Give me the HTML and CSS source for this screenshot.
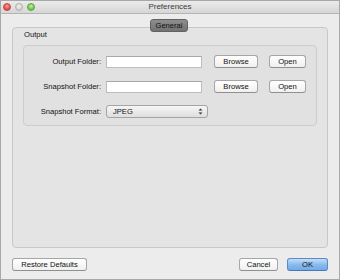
FILE: index.html
```html
<!DOCTYPE html>
<html lang="en">
<head>
    <meta charset="UTF-8">
    <title>Preferences</title>
    <link rel="stylesheet" href="styles.css">
</head>
<body>

<div class="window">
    <div class="titlebar">
        <div class="lights">
            <span class="light red"></span>
            <span class="light gray"></span>
            <span class="light green"></span>
        </div>
        <div class="title">Preferences</div>
    </div>

    <div class="content">
        <div class="tabpanel">
            <div class="tab">General</div>
            <div class="section-label">Output</div>
            <div class="group">
                <div class="row">
                    <label class="row-label">Output Folder:</label>
                    <input class="field" type="text" value="">
                    <button class="btn browse">Browse</button>
                    <button class="btn open">Open</button>
                </div>
                <div class="row">
                    <label class="row-label">Snapshot Folder:</label>
                    <input class="field" type="text" value="">
                    <button class="btn browse">Browse</button>
                    <button class="btn open">Open</button>
                </div>
                <div class="row">
                    <label class="row-label">Snapshot Format:</label>
                    <div class="select">
                        <span>JPEG</span>
                        <svg class="arrows" width="5" height="7" viewBox="0 0 5 7">
                            <path d="M0.5 2.6 L2.5 0.4 L4.5 2.6 Z" fill="#333"/>
                            <path d="M0.5 4.4 L2.5 6.6 L4.5 4.4 Z" fill="#333"/>
                        </svg>
                    </div>
                </div>
            </div>
        </div>

        <div class="footer">
            <button class="btn restore">Restore Defaults</button>
            <div class="footer-right">
                <button class="btn cancel">Cancel</button>
                <button class="btn ok">OK</button>
            </div>
        </div>
    </div>
</div>

</body>
</html>
```

FILE: styles.css
```css
html, body {
    margin: 0;
    padding: 0;
}
body {
    width: 340px;
    height: 280px;
    overflow: hidden;
    font-family: "Liberation Sans", Arial, sans-serif;
    font-size: 7.6px;
    color: #111;
}
.window {
    box-sizing: border-box;
    width: 340px;
    height: 280px;
    border: 1px solid #a8a8a8;
    background-color: #ececec;
    display: flex;
    flex-direction: column;
}
.titlebar {
    height: 12px;
    border-bottom: 1px solid #b4b4b4;
    background: linear-gradient(#ebebeb, #d6d6d6);
    display: flex;
    align-items: center;
    position: relative;
}
.lights {
    display: flex;
    gap: 4px;
    padding-left: 2px;
}
.light {
    width: 8px;
    height: 8px;
    border-radius: 50%;
    box-sizing: border-box;
}
.light.red {
    background: radial-gradient(circle at 50% 35%, #f7a4a0, #e0443e 70%);
    border: 1px solid #c4413a;
}
.light.gray {
    background: radial-gradient(circle at 50% 35%, #f4f4f4, #d0d0d0 70%);
    border: 1px solid #b0b0b0;
}
.light.green {
    background: radial-gradient(circle at 50% 35%, #c2eea0, #6cc04a 70%);
    border: 1px solid #5aa63c;
}
.title {
    position: absolute;
    left: 0;
    right: 0;
    top: 1px;
    text-align: center;
    font-size: 8px;
    color: #3c3c3c;
}
.content {
    flex: 1;
    display: flex;
    flex-direction: column;
    padding: 13px 11px 0 11px;
}
.tabpanel {
    position: relative;
    height: 219px;
    border: 1px solid #c8c8c8;
    border-radius: 4px;
    background-color: #e4e4e4;
    padding: 0 10px 0 10px;
}
.tab {
    position: absolute;
    left: 137px;
    top: -9px;
    width: 36px;
    height: 11px;
    line-height: 11px;
    text-align: center;
    border: 1px solid #626262;
    border-radius: 3px;
    background: linear-gradient(#8e8e8e, #727272);
    color: #111;
}
.section-label {
    padding: 2px 0 0 1px;
    height: 10px;
    line-height: 10px;
    margin-bottom: 5px;
}
.group {
    border: 1px solid #cdcdcd;
    border-radius: 4px;
    background-color: #e1e1e1;
    padding: 9px 0 7px 0;
    display: flex;
    flex-direction: column;
    gap: 12px;
}
.row {
    display: flex;
    align-items: center;
    height: 13px;
}
.row-label {
    width: 77px;
    margin-right: 5px;
    text-align: right;
}
.field {
    box-sizing: border-box;
    width: 96px;
    height: 12px;
    margin: 0 12px 0 0;
    padding: 0 2px;
    border: 1px solid #bdbdbd;
    border-top-color: #a8a8a8;
    background-color: #fff;
    outline: none;
}
.btn {
    box-sizing: border-box;
    height: 13px;
    padding: 0;
    font-family: inherit;
    font-size: 7.6px;
    color: #111;
    border: 1px solid #a6a6a6;
    border-bottom-color: #8f8f8f;
    border-radius: 3px;
    background: linear-gradient(#ffffff, #f0f0f0);
    line-height: 11px;
}
.browse {
    width: 44px;
    margin-right: 11px;
}
.open {
    width: 37px;
}
.select {
    box-sizing: border-box;
    width: 102px;
    height: 13px;
    border: 1px solid #a4a4a4;
    border-radius: 3px;
    background: linear-gradient(#f6f6f6, #dedede);
    display: flex;
    align-items: center;
    justify-content: space-between;
    padding: 0 4px 0 6px;
    line-height: 11px;
}
.footer {
    display: flex;
    justify-content: space-between;
    margin-top: 10px;
}
.footer-right {
    display: flex;
    gap: 9px;
}
.restore {
    width: 75px;
}
.cancel {
    width: 39px;
}
.ok {
    width: 41px;
    border-color: #5b8ac4;
    border-bottom-color: #4a78b0;
    background: linear-gradient(#c4def8, #86b8ee 55%, #74aaea);
}
```
